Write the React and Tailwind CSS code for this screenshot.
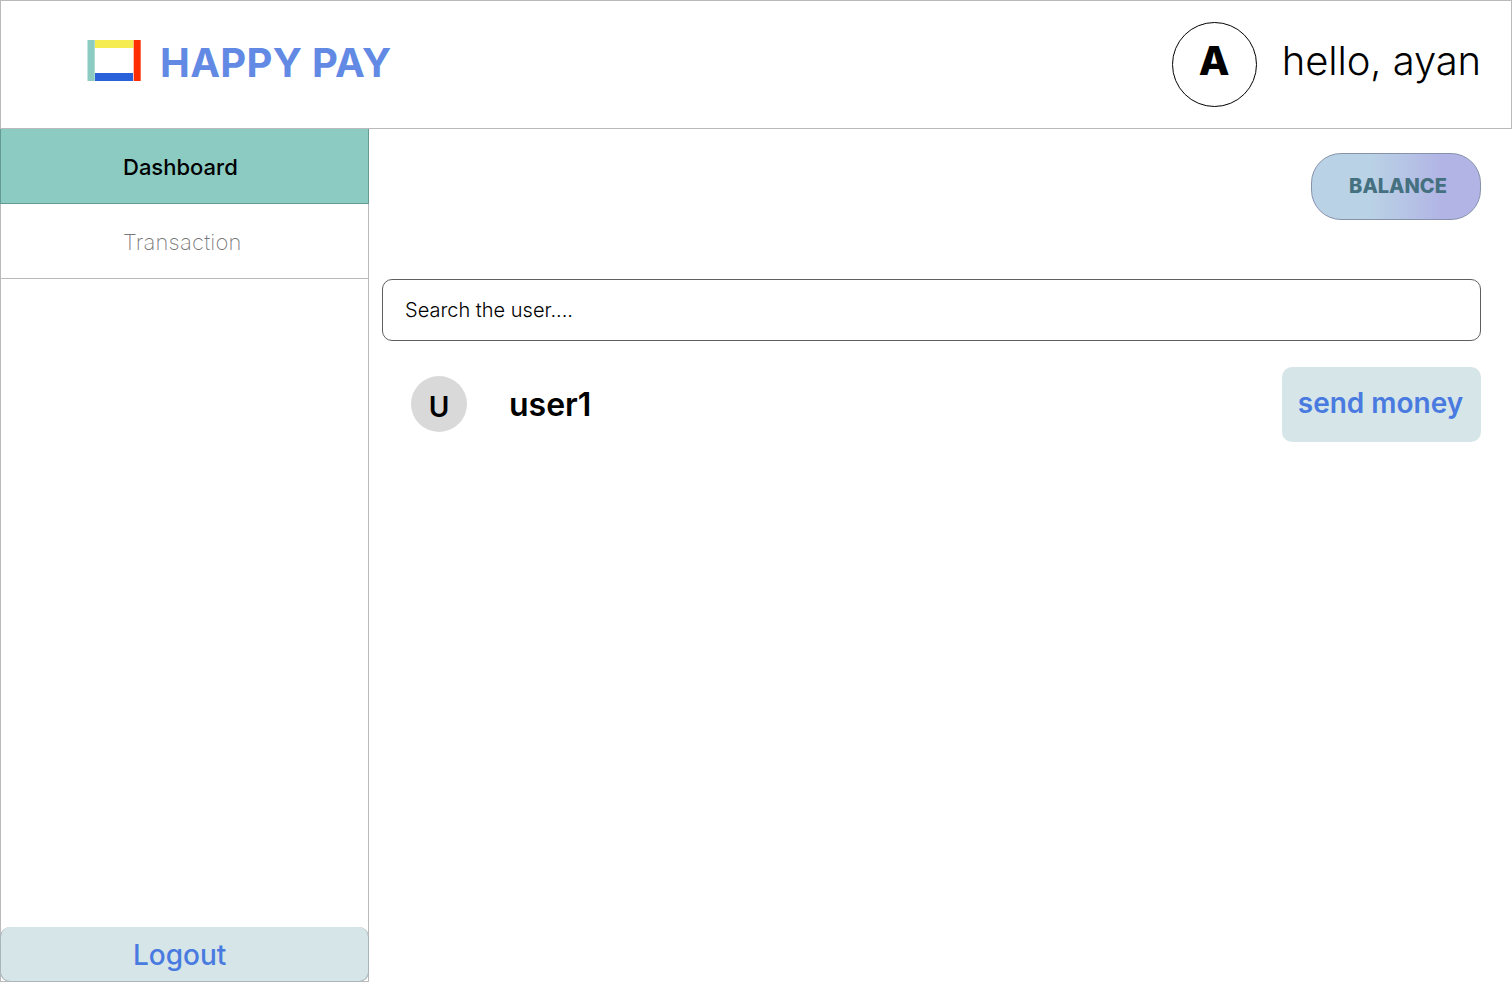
function Logo() {
  return (
    <svg width="54" height="41" viewBox="0 0 54 41" className="block shrink-0" aria-hidden="true">
      <rect x="8" y="0" width="38.5" height="8" fill="#F4EC51" />
      <rect x="8" y="33" width="38" height="8" fill="#2961DB" />
      <rect x="0.5" y="0" width="7.2" height="41" fill="#8CCBC2" />
      <rect x="46.7" y="0" width="7" height="41" fill="#FF2E00" />
    </svg>
  );
}

function Header() {
  return (
    <header className="flex h-[129px] shrink-0 items-start justify-between border border-[#bababa] pr-[30px] pl-[86px]">
      <div className="flex items-center pt-[39px]">
        <Logo />
        <span className="ml-[19px] h-[41px] text-[40px] leading-[45px] font-bold tracking-[0.3px] text-[#628AE4]">HAPPY PAY</span>
      </div>
      <div className="flex pt-[21px]">
        <div className="flex h-[85px] w-[85px] justify-center rounded-full border border-black text-[40px] leading-[76px] font-extrabold">
          A
        </div>
        <span className="ml-[25px] text-[40px] leading-[78px] font-light tracking-[-0.1px]">hello, ayan</span>
      </div>
    </header>
  );
}

function Sidebar() {
  return (
    <aside className="flex w-[369px] shrink-0 flex-col">
      <nav className="flex flex-col text-[22px]">
        <a className="h-[75px] border-x border-b border-[#649C94] bg-[#8CCBC2] pl-[122px] leading-[76px] font-medium">Dashboard</a>
        <a className="h-[75px] border-x border-b border-[#bababa] pl-[122px] leading-[76px] font-extralight tracking-[0.2px] text-black/55">Transaction</a>
      </nav>
      <div className="flex flex-1 flex-col justify-end border-x border-b border-[#bababa]">
        <button className="-mx-px -mb-px h-[55px] rounded-[10px] border-x border-b border-[#a9b6b8] bg-[#D6E5E8] pl-[132px] text-left text-[28px] leading-[56px] font-medium text-[#487AE0]">
          Logout
        </button>
      </div>
    </aside>
  );
}

function UserRow() {
  return (
    <div className="mt-[26px] flex h-[75px] items-start pl-[29px]">
      <div className="mt-[9px] flex h-14 w-14 justify-center rounded-full bg-[#D9D9D9] text-[28px] leading-[62px] font-semibold">U</div>
      <span className="ml-[42px] text-[32px] leading-[75px] font-semibold">user1</span>
      <button className="ml-auto h-[75px] w-[199px] rounded-[10px] bg-[#D6E5E8] pr-[2px] pb-[3px] text-[28px] font-semibold text-[#487AE0]">
        send money
      </button>
    </div>
  );
}

function Dashboard() {
  return (
    <main className="flex flex-1 flex-col pt-6 pr-[31px] pl-[13px]">
      <button className="h-[67px] w-[170px] self-end rounded-[30px] border border-[#8692ab] bg-linear-to-r from-[#BAD2E5] from-35% to-[#B1B4E5] to-78% bg-origin-border pb-[2px] pl-1 text-[20px] font-extrabold text-[#447080]">
        BALANCE
      </button>
      <input
        className="mt-[59px] h-[62px] rounded-[10px] border border-[#5f5f5f] px-[22px] text-[20px] font-light outline-none placeholder:text-black"
        placeholder="Search the user...."
      />
      <UserRow />
    </main>
  );
}

export default function App() {
  return (
    <div className="flex h-[982px] w-[1512px] flex-col overflow-hidden bg-white font-[Inter,sans-serif] whitespace-nowrap text-black">
      <Header />
      <div className="flex flex-1">
        <Sidebar />
        <Dashboard />
      </div>
    </div>
  );
}
